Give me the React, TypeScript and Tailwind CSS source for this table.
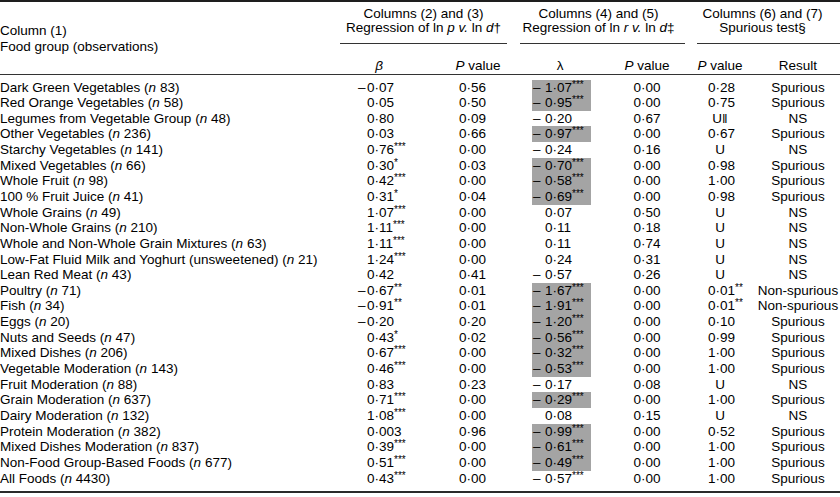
type Row = {
  name: string;
  n: string;
  beta: [boolean, string, string];
  p1: string;
  lam: [boolean, string, string];
  shade: boolean;
  p2: string;
  p3: [string, string];
  result: string;
};

const rows: Row[] = [
  { name: 'Dark Green Vegetables', n: '83', beta: [true, '0·07', ''], p1: '0·56', lam: [true, '1·07', '***'], shade: true, p2: '0·00', p3: ['0·28', ''], result: 'Spurious' },
  { name: 'Red Orange Vegetables', n: '58', beta: [false, '0·05', ''], p1: '0·50', lam: [true, '0·95', '***'], shade: true, p2: '0·00', p3: ['0·75', ''], result: 'Spurious' },
  { name: 'Legumes from Vegetable Group', n: '48', beta: [false, '0·80', ''], p1: '0·09', lam: [true, '0·20', ''], shade: false, p2: '0·67', p3: ['U‖', ''], result: 'NS' },
  { name: 'Other Vegetables', n: '236', beta: [false, '0·03', ''], p1: '0·66', lam: [true, '0·97', '***'], shade: true, p2: '0·00', p3: ['0·67', ''], result: 'Spurious' },
  { name: 'Starchy Vegetables', n: '141', beta: [false, '0·76', '***'], p1: '0·00', lam: [true, '0·24', ''], shade: false, p2: '0·16', p3: ['U', ''], result: 'NS' },
  { name: 'Mixed Vegetables', n: '66', beta: [false, '0·30', '*'], p1: '0·03', lam: [true, '0·70', '***'], shade: true, p2: '0·00', p3: ['0·98', ''], result: 'Spurious' },
  { name: 'Whole Fruit', n: '98', beta: [false, '0·42', '***'], p1: '0·00', lam: [true, '0·58', '***'], shade: true, p2: '0·00', p3: ['1·00', ''], result: 'Spurious' },
  { name: '100 % Fruit Juice', n: '41', beta: [false, '0·31', '*'], p1: '0·04', lam: [true, '0·69', '***'], shade: true, p2: '0·00', p3: ['0·98', ''], result: 'Spurious' },
  { name: 'Whole Grains', n: '49', beta: [false, '1·07', '***'], p1: '0·00', lam: [false, '0·07', ''], shade: false, p2: '0·50', p3: ['U', ''], result: 'NS' },
  { name: 'Non-Whole Grains', n: '210', beta: [false, '1·11', '***'], p1: '0·00', lam: [false, '0·11', ''], shade: false, p2: '0·18', p3: ['U', ''], result: 'NS' },
  { name: 'Whole and Non-Whole Grain Mixtures', n: '63', beta: [false, '1·11', '***'], p1: '0·00', lam: [false, '0·11', ''], shade: false, p2: '0·74', p3: ['U', ''], result: 'NS' },
  { name: 'Low-Fat Fluid Milk and Yoghurt (unsweetened)', n: '21', beta: [false, '1·24', '***'], p1: '0·00', lam: [false, '0·24', ''], shade: false, p2: '0·31', p3: ['U', ''], result: 'NS' },
  { name: 'Lean Red Meat', n: '43', beta: [false, '0·42', ''], p1: '0·41', lam: [true, '0·57', ''], shade: false, p2: '0·26', p3: ['U', ''], result: 'NS' },
  { name: 'Poultry', n: '71', beta: [true, '0·67', '**'], p1: '0·01', lam: [true, '1·67', '***'], shade: true, p2: '0·00', p3: ['0·01', '**'], result: 'Non-spurious' },
  { name: 'Fish', n: '34', beta: [true, '0·91', '**'], p1: '0·01', lam: [true, '1·91', '***'], shade: true, p2: '0·00', p3: ['0·01', '**'], result: 'Non-spurious' },
  { name: 'Eggs', n: '20', beta: [true, '0·20', ''], p1: '0·20', lam: [true, '1·20', '***'], shade: true, p2: '0·00', p3: ['0·10', ''], result: 'Spurious' },
  { name: 'Nuts and Seeds', n: '47', beta: [false, '0·43', '*'], p1: '0·02', lam: [true, '0·56', '***'], shade: true, p2: '0·00', p3: ['0·99', ''], result: 'Spurious' },
  { name: 'Mixed Dishes', n: '206', beta: [false, '0·67', '***'], p1: '0·00', lam: [true, '0·32', '***'], shade: true, p2: '0·00', p3: ['1·00', ''], result: 'Spurious' },
  { name: 'Vegetable Moderation', n: '143', beta: [false, '0·46', '***'], p1: '0·00', lam: [true, '0·53', '***'], shade: true, p2: '0·00', p3: ['1·00', ''], result: 'Spurious' },
  { name: 'Fruit Moderation', n: '88', beta: [false, '0·83', ''], p1: '0·23', lam: [true, '0·17', ''], shade: false, p2: '0·08', p3: ['U', ''], result: 'NS' },
  { name: 'Grain Moderation', n: '637', beta: [false, '0·71', '***'], p1: '0·00', lam: [true, '0·29', '***'], shade: true, p2: '0·00', p3: ['1·00', ''], result: 'Spurious' },
  { name: 'Dairy Moderation', n: '132', beta: [false, '1·08', '***'], p1: '0·00', lam: [false, '0·08', ''], shade: false, p2: '0·15', p3: ['U', ''], result: 'NS' },
  { name: 'Protein Moderation', n: '382', beta: [false, '0·003', ''], p1: '0·96', lam: [true, '0·99', '***'], shade: true, p2: '0·00', p3: ['0·52', ''], result: 'Spurious' },
  { name: 'Mixed Dishes Moderation', n: '837', beta: [false, '0·39', '***'], p1: '0·00', lam: [true, '0·61', '***'], shade: true, p2: '0·00', p3: ['1·00', ''], result: 'Spurious' },
  { name: 'Non-Food Group-Based Foods', n: '677', beta: [false, '0·51', '***'], p1: '0·00', lam: [true, '0·49', '***'], shade: true, p2: '0·00', p3: ['1·00', ''], result: 'Spurious' },
  { name: 'All Foods', n: '4430', beta: [false, '0·43', '***'], p1: '0·00', lam: [true, '0·57', '***'], shade: false, p2: '0·00', p3: ['1·00', ''], result: 'Spurious' },
];

function Stars({ s }: { s: string }) {
  if (!s) return null;
  return <span className="text-[10px] leading-[0] align-[4px]">{s}</span>;
}

export default function App() {
  return (
    <div className="w-[840px] h-[497px] bg-white text-black font-['Liberation_Sans',Arial,sans-serif] text-[13.5px]">
      <div className="border-t-2 border-[#1e1e1e]">
        {/* header */}
        <div className="flex h-[73px] border-b border-[#333]">
          <div className="w-[340px] pt-[21px] leading-[16px]">
            <div>Column (1)</div>
            <div>Food group (observations)</div>
          </div>
          <div className="w-[500px] flex flex-col">
            <div className="flex pt-[5px] leading-[14px]">
              <div className="w-[180px]">
                <div className="pr-[13px] text-center">
                  <div>Columns (2) and (3)</div>
                  <div>Regression of ln <i>p</i> <i>v.</i> ln <i>d</i>†</div>
                </div>
                <div className="mr-[13px] mt-[8px] border-t border-[#333]" />
              </div>
              <div className="w-[174px]">
                <div className="pr-[17px] text-center">
                  <div>Columns (4) and (5)</div>
                  <div>Regression of ln <i>r</i> <i>v.</i> ln <i>d</i>‡</div>
                </div>
                <div className="mr-[9px] mt-[8px] border-t border-[#333]" />
              </div>
              <div className="w-[146px]">
                <div className="pr-[9px] text-center">
                  <div>Columns (6) and (7)</div>
                  <div>Spurious test§</div>
                </div>
                <div className="ml-[3px] mt-[8px] border-t border-[#333]" />
              </div>
            </div>
            <div className="grid grid-cols-[90px_90px_80px_94px_52px_94px] mt-[14px] leading-[16px] text-center">
              <div className="pr-[12px]"><i>β</i></div>
              <div className="pl-[6px]"><i>P</i> value</div>
              <div>λ</div>
              <div><i>P</i> value</div>
              <div><i>P</i> value</div>
              <div className="pl-[10px]">Result</div>
            </div>
          </div>
        </div>

        {/* body */}
        <div className="pt-[4.5px] pb-[5px] border-b-2 border-[#2a2a2a]">
          {rows.map((r, i) => (
            <div key={`${r.name}-${i}`} className="grid grid-cols-[340px_90px_90px_80px_94px_52px_94px] h-[15.65px] leading-[15.65px] whitespace-nowrap">
              <div>
                {r.name} (<i>n</i> {r.n})
              </div>
              <div className="flex pl-[18px]">
                <span className="w-[9px]">{r.beta[0] ? '–' : ''}</span>
                <span>{r.beta[1]}<Stars s={r.beta[2]} /></span>
              </div>
              <div className="text-center pr-[5px]">{r.p1}</div>
              <div>
                <div className={`ml-[12px] w-[59px] h-full flex pl-[1px] ${r.shade ? 'bg-[#a4a4a4]' : ''}`}>
                  <span className="w-[12px]">{r.lam[0] ? '–' : ''}</span>
                  <span>{r.lam[1]}<Stars s={r.lam[2]} /></span>
                </div>
              </div>
              <div className="text-center">{r.p2}</div>
              {r.p3[0].startsWith('U') ? (
                <div className="text-center">{r.p3[0]}</div>
              ) : (
                <div className="pl-[14px]">{r.p3[0]}<Stars s={r.p3[1]} /></div>
              )}
              <div className="text-center pl-[10px]">{r.result}</div>
            </div>
          ))}
        </div>
      </div>
    </div>
  );
}
